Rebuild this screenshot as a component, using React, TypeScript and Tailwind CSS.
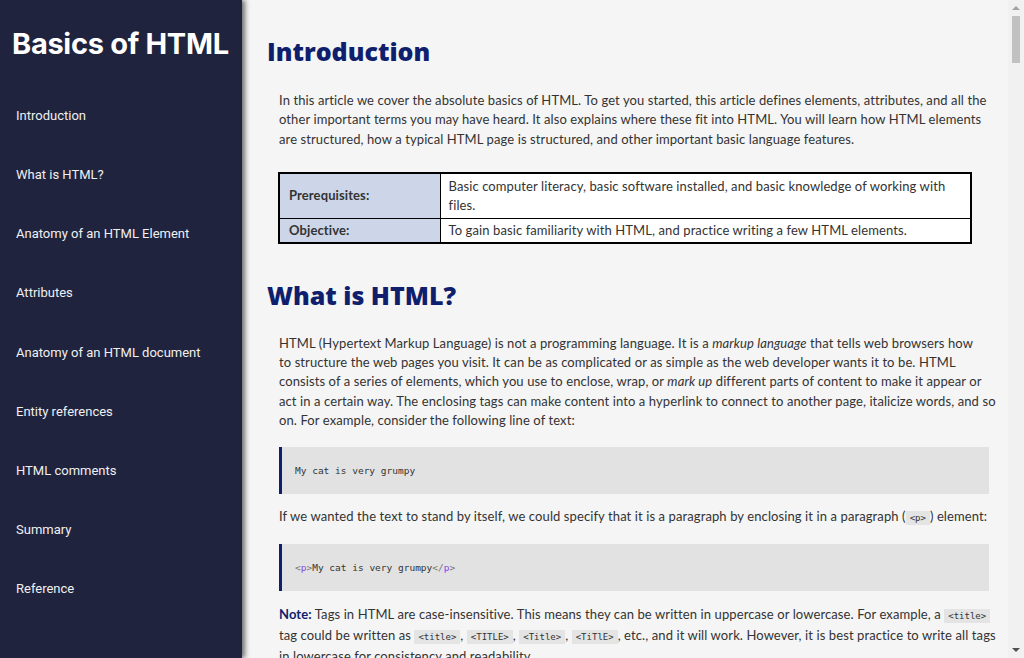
import React from 'react';

const navItems = [
  'Introduction',
  'What is HTML?',
  'Anatomy of an HTML Element',
  'Attributes',
  'Anatomy of an HTML document',
  'Entity references',
  'HTML comments',
  'Summary',
  'Reference',
];

const Code = ({ children }: { children: React.ReactNode }) => (
  <code className="bg-[#e4e4e4] px-[4px] py-[2px] text-[9px] tracking-normal text-[#333] font-['DejaVu_Sans_Mono',monospace]">
    {children}
  </code>
);

const App = () => {
  return (
    <div className="flex h-screen w-full overflow-hidden bg-[#f5f5f5] font-['Lato',sans-serif]">
      {/* Sidebar */}
      <nav className="relative z-10 w-[242px] shrink-0 bg-[#1f233e] shadow-[3px_0_5px_rgba(0,0,0,0.55)]">
        <h1 className="pl-[12px] pt-[26px] text-[29px] font-bold leading-[36px] tracking-[-0.3px] text-white font-['Inter',sans-serif]">
          Basics of HTML
        </h1>
        <ul className="mt-[24px] flex flex-col">
          {navItems.map((item) => (
            <li
              key={item}
              className="flex h-[59.2px] items-center pl-[16px] text-[13px] text-[#f0f0f0] font-['Roboto',sans-serif]"
            >
              {item}
            </li>
          ))}
        </ul>
      </nav>

      {/* Main content */}
      <main className="flex-1 overflow-hidden pl-[25px] pr-[19px] text-[13px] leading-[19.3px] tracking-[0.1px] text-[#333]">
        <h2 className="pt-[33px] text-[25px] font-extrabold leading-[36px] tracking-normal text-[#0f1f6e] font-['Open_Sans',sans-serif]">
          Introduction
        </h2>
        <p className="mt-[22px] whitespace-nowrap pl-[12px]">
          In this article we cover the absolute basics of HTML. To get you started, this article defines elements,
          attributes, and all the
          <br />
          other important terms you may have heard. It also explains where these fit into HTML. You will learn how
          HTML elements
          <br />
          are structured, how a typical HTML page is structured, and other important basic language features.
        </p>

        <table className="ml-[11px] mt-[23px] w-[694px] border-collapse border-2 border-black text-[13px]">
          <tbody>
            <tr>
              <th className="w-[161px] border border-black bg-[#ccd6e8] px-[9px] text-left font-bold">
                Prerequisites:
              </th>
              <td className="border border-black bg-white px-[8px] py-[3px] leading-[19px]">
                Basic computer literacy, basic software installed, and basic knowledge of working with
                <br />
                files.
              </td>
            </tr>
            <tr>
              <th className="border border-black bg-[#ccd6e8] px-[9px] text-left font-bold leading-[23px]">
                Objective:
              </th>
              <td className="border border-black bg-white px-[8px] leading-[23px]">
                To gain basic familiarity with HTML, and practice writing a few HTML elements.
              </td>
            </tr>
          </tbody>
        </table>

        <h2 className="mt-[33px] text-[25px] font-extrabold leading-[36px] tracking-normal text-[#0f1f6e] font-['Open_Sans',sans-serif]">
          What is HTML?
        </h2>
        <p className="mt-[21px] whitespace-nowrap pl-[12px]">
          HTML (Hypertext Markup Language) is not a programming language. It is a <em>markup language</em> that tells
          web browsers how
          <br />
          to structure the web pages you visit. It can be as complicated or as simple as the web developer wants it to
          be. HTML
          <br />
          consists of a series of elements, which you use to enclose, wrap, or <em>mark up</em> different parts of
          content to make it appear or
          <br />
          act in a certain way. The enclosing tags can make content into a hyperlink to connect to another page,
          italicize words, and so
          <br />
          on. For example, consider the following line of text:
        </p>

        <pre className="ml-[12px] mt-[17px] flex h-[47px] items-center border-l-[3px] border-[#0f1f6e] bg-[#e2e2e2] pl-[13px] text-[9.5px] tracking-normal text-[#333] font-['DejaVu_Sans_Mono',monospace]">
          My cat is very grumpy
        </pre>

        <p className="mt-[13px] whitespace-nowrap pl-[12px]">
          If we wanted the text to stand by itself, we could specify that it is a paragraph by enclosing it in a
          paragraph (<Code>&lt;p&gt;</Code>) element:
        </p>

        <pre className="ml-[12px] mt-[15px] flex h-[47px] items-center border-l-[3px] border-[#0f1f6e] bg-[#e2e2e2] pl-[13px] text-[9.5px] tracking-normal text-[#333] font-['DejaVu_Sans_Mono',monospace]">
          <span className="text-[#777]">&lt;</span>
          <span className="text-[#8a3ff0]">p</span>
          <span className="text-[#777]">&gt;</span>My cat is very grumpy
          <span className="text-[#777]">&lt;/</span>
          <span className="text-[#8a3ff0]">p</span>
          <span className="text-[#777]">&gt;</span>
        </pre>

        <p className="mt-[14px] whitespace-nowrap pb-[20px] pl-[12px]">
          <strong className="text-[#0f1f6e]">Note:</strong> Tags in HTML are case-insensitive. This means they can be
          written in uppercase or lowercase. For example, a <Code>&lt;title&gt;</Code>
          <br />
          tag could be written as <Code>&lt;title&gt;</Code>, <Code>&lt;TITLE&gt;</Code>, <Code>&lt;Title&gt;</Code>,{' '}
          <Code>&lt;TiTlE&gt;</Code>, etc., and it will work. However, it is best practice to write all tags
          <br />
          in lowercase for consistency and readability.
        </p>
      </main>

      {/* Scrollbar */}
      <div className="flex w-[16px] shrink-0 flex-col items-center bg-[#f1f1f1]">
        <div className="mt-[6px] h-0 w-0 border-x-[4px] border-b-[4px] border-x-transparent border-b-[#a3a3a3]" />
        <div className="mt-[6px] h-[47px] w-[8px] bg-[#c1c1c1]" />
        <div className="flex-1" />
        <div className="mb-[6px] h-0 w-0 border-x-[4px] border-t-[4px] border-x-transparent border-t-[#505050]" />
      </div>
    </div>
  );
};

export default App;
